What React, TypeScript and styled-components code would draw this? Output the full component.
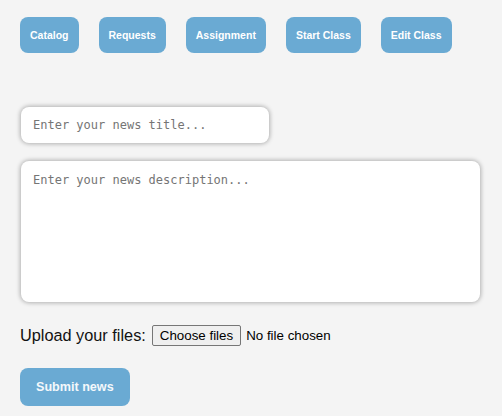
import React, { useState } from "react";
import styled, { createGlobalStyle } from "styled-components";

const GlobalStyle = createGlobalStyle`
  html, body {
    margin: 0;
    padding: 0;
    background: #f4f4f4;
  }
  body {
    font-family: "Liberation Sans", Arial, sans-serif;
  }
`;

const Page = styled.div`
  padding: 17px 20px 10px 20px;
  display: flex;
  flex-direction: column;
`;

const Nav = styled.nav`
  display: flex;
  gap: 20px;
`;

const NavButton = styled.button`
  height: 36px;
  padding: 0 10px;
  border: none;
  border-radius: 8px;
  background: #6aaad3;
  color: #ffffff;
  font-family: "Liberation Sans", Arial, sans-serif;
  font-weight: bold;
  font-size: 10.5px;
  cursor: pointer;
`;

const Form = styled.form`
  display: flex;
  flex-direction: column;
  margin-top: 54px;
`;

const TitleInput = styled.input`
  box-sizing: border-box;
  width: 248px;
  height: 36px;
  margin-left: 1px;
  padding: 0 12px;
  border: none;
  border-radius: 8px;
  background: #ffffff;
  box-shadow: 0 0 4px 1px rgba(0, 0, 0, 0.28);
  font-family: "DejaVu Sans Mono", "Liberation Mono", monospace;
  font-size: 12px;
  outline: none;
  &::placeholder {
    color: #757575;
  }
`;

const DescArea = styled.textarea`
  box-sizing: border-box;
  width: 459px;
  height: 141px;
  margin: 18px 0 0 1px;
  padding: 12px;
  border: none;
  border-radius: 8px;
  background: #ffffff;
  box-shadow: 0 0 4px 1px rgba(0, 0, 0, 0.28);
  font-family: "DejaVu Sans Mono", "Liberation Mono", monospace;
  font-size: 12px;
  line-height: 15px;
  resize: none;
  outline: none;
  &::placeholder {
    color: #757575;
  }
`;

const UploadRow = styled.div`
  display: flex;
  align-items: center;
  gap: 6px;
  margin-top: 23px;
`;

const UploadLabel = styled.span`
  font-family: "Liberation Sans", Arial, sans-serif;
  font-size: 16.3px;
  color: #111111;
`;

const FilePicker = styled.label`
  display: inline-flex;
  align-items: center;
  gap: 5px;
  font-family: "Liberation Sans", Arial, sans-serif;
  font-size: 13.33px;
  color: #000000;
  cursor: pointer;
`;

const HiddenFile = styled.input`
  display: none;
`;

const FileButton = styled.span`
  box-sizing: border-box;
  height: 21px;
  display: inline-flex;
  align-items: center;
  padding: 0 7px;
  border: 1px solid #767676;
  border-radius: 2px;
  background: #efefef;
  color: #000000;
`;

const SubmitButton = styled.button`
  align-self: flex-start;
  height: 38px;
  margin-top: 22px;
  padding: 0 16px;
  border: none;
  border-radius: 8px;
  background: #6aaad3;
  color: #f4f8fb;
  font-family: "Liberation Sans", Arial, sans-serif;
  font-weight: bold;
  font-size: 12.6px;
  cursor: pointer;
`;

const navItems = ["Catalog", "Requests", "Assignment", "Start Class", "Edit Class"];

export default function App() {
  const [fileText, setFileText] = useState("No file chosen");
  return (
    <>
      <GlobalStyle />
      <Page>
        <Nav>
          {navItems.map((n) => (
            <NavButton key={n} type="button">
              {n}
            </NavButton>
          ))}
        </Nav>
        <Form onSubmit={(e) => e.preventDefault()}>
          <TitleInput type="text" placeholder="Enter your news title..." />
          <DescArea placeholder="Enter your news description..." />
          <UploadRow>
            <UploadLabel>Upload your files:</UploadLabel>
            <FilePicker>
              <HiddenFile
                type="file"
                multiple
                onChange={(e) => {
                  const n = e.target.files ? e.target.files.length : 0;
                  setFileText(
                    n === 0 ? "No file chosen" : n === 1 ? e.target.files![0].name : `${n} files`
                  );
                }}
              />
              <FileButton>Choose files</FileButton>
              <span>{fileText}</span>
            </FilePicker>
          </UploadRow>
          <SubmitButton type="submit">Submit news</SubmitButton>
        </Form>
      </Page>
    </>
  );
}
